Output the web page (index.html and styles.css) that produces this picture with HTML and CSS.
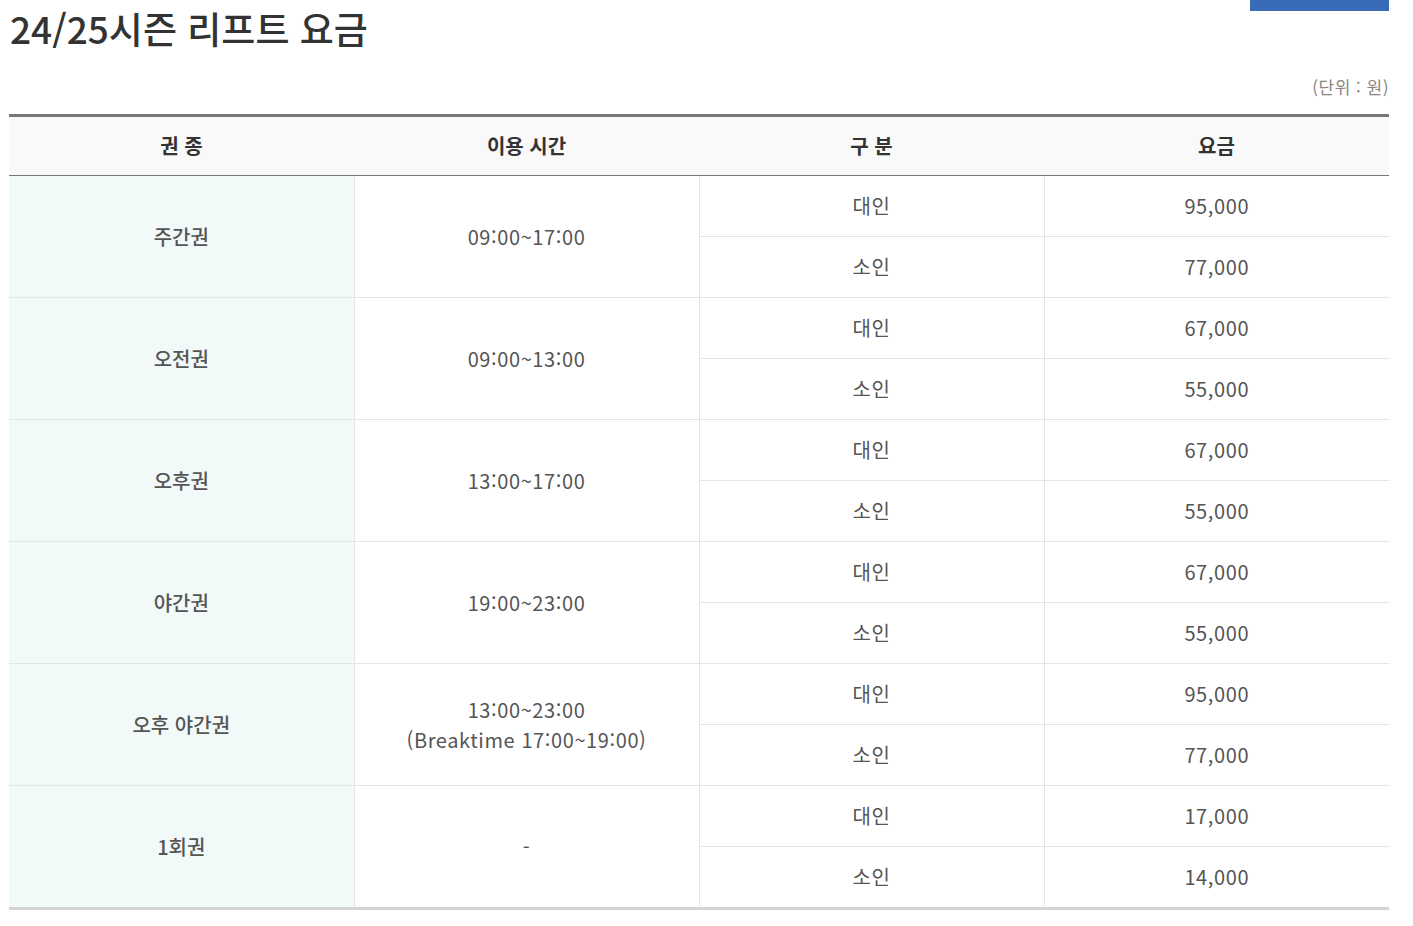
FILE: index.html
```html
<!DOCTYPE html>
<html lang="ko">
<head>
    <meta charset="UTF-8">
    <meta name="viewport" content="width=device-width, initial-scale=1.0">
    <title>24/25시즌 리프트 요금</title>
    <link rel="stylesheet" href="styles.css">
</head>
<body>
    <div class="wrap">
        <div class="top">
            <h1>24/25시즌 리프트 요금</h1>
            <span class="bar"></span>
        </div>
        <p class="unit">(단위 : 원)</p>

        <table class="price">
            <thead>
                <tr>
                    <th>권 종</th>
                    <th>이용 시간</th>
                    <th>구 분</th>
                    <th>요금</th>
                </tr>
            </thead>
            <tbody>
                <tr>
                    <td rowspan="2" class="kind">주간권</td>
                    <td rowspan="2">09:00~17:00</td>
                    <td>대인</td>
                    <td>95,000</td>
                </tr>
                <tr>
                    <td>소인</td>
                    <td>77,000</td>
                </tr>
                <tr>
                    <td rowspan="2" class="kind">오전권</td>
                    <td rowspan="2">09:00~13:00</td>
                    <td>대인</td>
                    <td>67,000</td>
                </tr>
                <tr>
                    <td>소인</td>
                    <td>55,000</td>
                </tr>
                <tr>
                    <td rowspan="2" class="kind">오후권</td>
                    <td rowspan="2">13:00~17:00</td>
                    <td>대인</td>
                    <td>67,000</td>
                </tr>
                <tr>
                    <td>소인</td>
                    <td>55,000</td>
                </tr>
                <tr>
                    <td rowspan="2" class="kind">야간권</td>
                    <td rowspan="2">19:00~23:00</td>
                    <td>대인</td>
                    <td>67,000</td>
                </tr>
                <tr>
                    <td>소인</td>
                    <td>55,000</td>
                </tr>
                <tr>
                    <td rowspan="2" class="kind">오후 야간권</td>
                    <td rowspan="2">13:00~23:00<br>(Breaktime 17:00~19:00)</td>
                    <td>대인</td>
                    <td>95,000</td>
                </tr>
                <tr>
                    <td>소인</td>
                    <td>77,000</td>
                </tr>
                <tr>
                    <td rowspan="2" class="kind">1회권</td>
                    <td rowspan="2">-</td>
                    <td>대인</td>
                    <td>17,000</td>
                </tr>
                <tr>
                    <td>소인</td>
                    <td>14,000</td>
                </tr>
            </tbody>
        </table>
    </div>
</body>
</html>
```

FILE: styles.css
```css
body {
    margin: 0;
    font-family: "Noto Sans CJK KR", "Noto Sans", sans-serif;
    color: #555;
    background: #fff;
}
.wrap {
    width: 1380px;
    margin-left: 9px;
}
.top {
    display: flex;
    justify-content: space-between;
    align-items: flex-start;
}
h1 {
    margin: 4px 0 0 1px;
    font-size: 37px;
    font-weight: 500;
    line-height: 48px;
    color: #333;
}
.bar {
    display: block;
    width: 139px;
    height: 11px;
    background: #3a6bb9;
}
.unit {
    margin: 21px 0 0;
    text-align: right;
    font-size: 17px;
    line-height: 28px;
    color: #8a8682;
    letter-spacing: 0.5px;
}
.price {
    width: 100%;
    margin-top: 13px;
    border-collapse: collapse;
    table-layout: fixed;
    border-top: 3px solid #777;
    border-bottom: 3px solid #d4d4d4;
}
.price th {
    height: 58px;
    padding: 0;
    background: #f9f9f9;
    border-bottom: 1px solid #777;
    font-size: 20px;
    font-weight: 700;
    line-height: 28px;
    color: #333;
}
.price td {
    height: 60px;
    padding: 0;
    text-align: center;
    font-size: 20px;
    line-height: 30px;
    letter-spacing: 0.6px;
    border: 1px solid #e5e5e5;
}
.price tr td:first-child {
    border-left: none;
}
.price tr td:last-child {
    border-right: none;
}
.price tr td.kind {
    background: #f1f9f9;
    font-weight: 500;
    letter-spacing: 0;
}
.price td[rowspan="2"]:not(.kind) {
    border-left: 1px solid #e5e5e5;
}
```
